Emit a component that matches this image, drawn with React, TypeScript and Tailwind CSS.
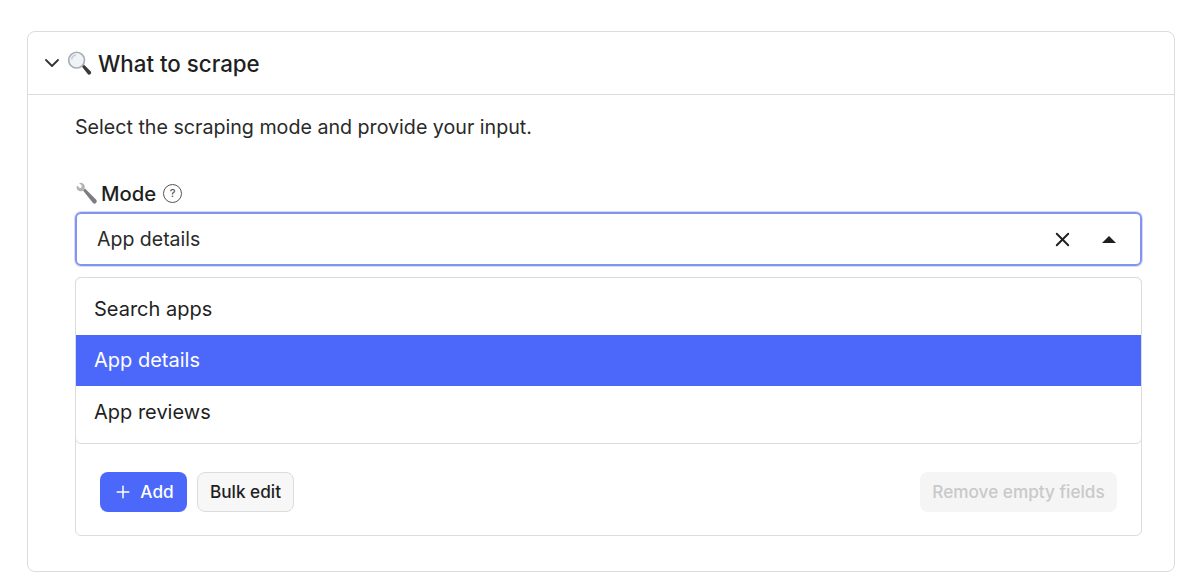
import React from "react";
import { ChevronDown, X, Plus } from "lucide-react";

function Magnifier() {
  return (
    <svg width="25" height="25" viewBox="0 0 26 26" className="shrink-0">
      <path d="M15 15.5 L17 13.5 L25 21.5 Q25.5 23.5 24.5 24 Q23.5 25 22 24.5 Z" fill="#3a3a3c" />
      <path d="M14.5 14.5 L16.5 12.5 L18 14 L16 16 Z" fill="#a8a8ac" />
      <circle cx="10" cy="9.5" r="8.2" fill="#eef3f8" stroke="#a9adb3" strokeWidth="1.7" />
      <path d="M4.8 9a5.4 5.4 0 0 1 4.6-4.8" stroke="#c4ccd6" strokeWidth="1.5" fill="none" />
    </svg>
  );
}

function Wrench() {
  return (
    <svg width="23" height="23" viewBox="0 0 23 23" className="shrink-0">
      <path d="M8 8.5 L10 6.5 L21.5 18 Q22.3 20 21 21 Q19.7 22.3 18 21 Z" fill="#7b7d82" />
      <path d="M2 3.5 L5 6.2 L6.6 5.5 L6.8 3.6 L4 1 Q7.5 0.2 9 2.5 Q10.4 4.8 9.4 7 L7.2 9.2 Q4.5 9.8 2.6 8 Q0.8 6 2 3.5 Z" fill="#b0b2b6" />
    </svg>
  );
}

export default function App() {
  return (
    <div className="h-[583px] w-[1200px] overflow-hidden bg-white pl-[27px] pr-[25px] pt-[31px] font-['Inter',sans-serif] text-[#1f1f1f]">
      <div className="h-[541px] rounded-[8px] border border-[#dcdcdc]">
        <div className="flex h-[63px] items-center gap-[3px] border-b border-[#dcdcdc] pl-[12px]">
          <ChevronDown size={24} strokeWidth={1.8} className="text-[#333]" />
          <div className="flex items-center gap-[6px]">
            <Magnifier />
            <span className="relative top-px text-[22.3px] font-medium leading-none">What to scrape</span>
          </div>
        </div>
        <div className="pl-[47px] pr-[32px]">
          <p className="mt-[20px] text-[19.65px] leading-[24px] text-[#2a2a2a]">Select the scraping mode and provide your input.</p>
          <div className="mt-[42px] flex h-[24px] items-center">
            <Wrench />
            <span className="relative top-px ml-[3px] text-[20.3px] font-[450] leading-none">Mode</span>
            <span className="ml-[7px] flex h-[19px] w-[19px] items-center justify-center rounded-full border-[1.5px] border-[#555] text-[11px] font-medium leading-none text-[#555]">?</span>
          </div>
          <div className="mt-[7px] flex h-[54px] items-center justify-between rounded-[6px] border-2 border-[#8394ef] pl-[20px] pr-[24px] shadow-[0_0_0_1px_#d5dbfa]">
            <span className="relative top-px text-[19.5px] text-[#2a2a2a]">App details</span>
            <div className="flex items-center gap-[28px]">
              <X size={23} strokeWidth={2} className="text-[#1f1f1f]" />
              <div className="h-0 w-0 border-x-[7px] border-b-[7px] border-x-transparent border-b-[#1f1f1f]" />
            </div>
          </div>
          <div className="mt-[11px] h-[259px] rounded-[6px] border border-[#dcdcdc]">
            <div className="-mx-px -mt-px h-[167px] rounded-[6px] border border-[#dcdcdc] bg-white">
              <div className="flex h-[57px] items-center pl-[18px] pt-[4px] text-[20px] leading-none">Search apps</div>
              <div className="flex h-[51px] items-center bg-[#4c68fb] pb-[2px] pl-[18px] text-[20px] leading-none text-white">App details</div>
              <div className="flex h-[52px] items-center pb-px pl-[18px] text-[20px] leading-none">App reviews</div>
            </div>
            <div className="mt-[28px] flex items-center pl-[24px] pr-[24px]">
              <button className="flex h-[40px] w-[87px] items-center justify-center gap-[7px] rounded-[8px] bg-[#4c68fb] text-[17.2px] font-[450] text-white">
                <Plus size={20} strokeWidth={1.8} />
                Add
              </button>
              <button className="ml-[10px] flex h-[40px] w-[97px] items-center justify-center rounded-[8px] border border-[#dcdcdc] bg-[#f7f7f7] text-[17.2px] font-[450] text-[#1f1f1f]">
                Bulk edit
              </button>
              <button className="ml-auto flex h-[40px] w-[197px] items-center justify-center rounded-[8px] bg-[#f5f5f5] text-[17.2px] font-[450] text-[#c9c9c9]">
                Remove empty fields
              </button>
            </div>
          </div>
        </div>
      </div>
    </div>
  );
}
